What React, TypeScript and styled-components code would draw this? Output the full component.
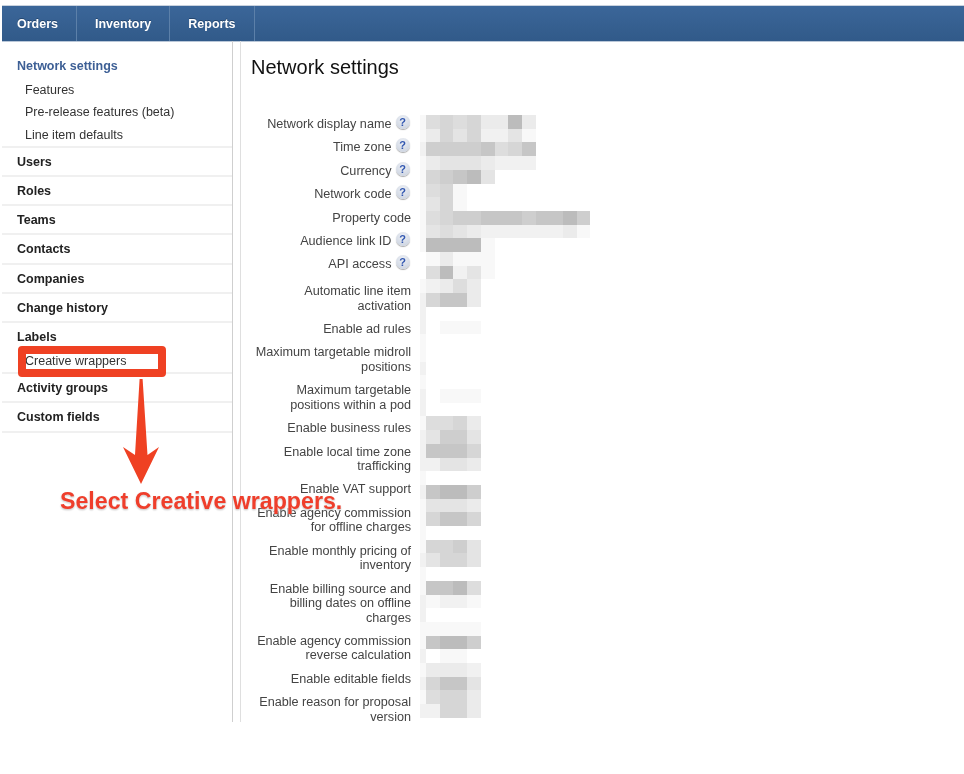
import styled, { createGlobalStyle } from "styled-components";

const GlobalStyle = createGlobalStyle`
  html, body {
    margin: 0;
    padding: 0;
    background: #fff;
  }
  body {
    font-family: "Liberation Sans", Arial, sans-serif;
    font-size: 12.5px;
  }
`;

const tabs = ["Orders", "Inventory", "Reports"];

const navGroups = [
  { title: "Network settings", active: true, top: 18, subs: ["Features", "Pre-release features (beta)", "Line item defaults"] },
  { title: "Users" },
  { title: "Roles" },
  { title: "Teams" },
  { title: "Contacts" },
  { title: "Companies" },
  { title: "Change history" },
  { title: "Labels", subs: ["Creative wrappers"] },
  { title: "Activity groups" },
  { title: "Custom fields" },
];

const fields: { label: string; help?: boolean; extra?: number }[] = [
  { label: "Network display name", help: true },
  { label: "Time zone", help: true },
  { label: "Currency", help: true },
  { label: "Network code", help: true },
  { label: "Property code" },
  { label: "Audience link ID", help: true },
  { label: "API access", help: true, extra: 3.5 },
  { label: "Automatic line item activation" },
  { label: "Enable ad rules" },
  { label: "Maximum targetable midroll positions" },
  { label: "Maximum targetable positions within a pod" },
  { label: "Enable business rules" },
  { label: "Enable local time zone trafficking" },
  { label: "Enable VAT support" },
  { label: "Enable agency commission for offline charges" },
  { label: "Enable monthly pricing of inventory" },
  { label: "Enable billing source and billing dates on offline charges" },
  { label: "Enable agency commission reverse calculation" },
  { label: "Enable editable fields" },
  { label: "Enable reason for proposal version" },
];

// grey level of each censored block, one string per row, first column is the narrow one
const mosaic = [
  "156563393",
  "136462241",
  "277778568",
  "134443222",
  "167894",
  "1561",
  "1461",
  "1567788878897",
  "1454322222231",
  "199991",
  "013111",
  "059241",
  "12353",
  "26883",
  "2",
  "20111",
  "1",
  "1",
  "2",
  "1",
  "20111",
  "2",
  "15563",
  "24774",
  "28886",
  "22443",
  "1",
  "28997",
  "14443",
  "16886",
  "1",
  "16674",
  "24664",
  "1",
  "18895",
  "21221",
  "2",
  "11111",
  "18997",
  "20110",
  "13332",
  "26884",
  "15663",
  "22663",
];

const greys = ["#ffffff", "#f8f8f8", "#f1f1f1", "#ebebeb", "#e4e4e4", "#dddddd", "#d6d6d6", "#cecece", "#c6c6c6", "#bcbcbc"];

const CELL = 13.7;

const Mosaic = () => (
  <svg width="171" height="603" viewBox="0 0 171 603" shapeRendering="crispEdges" aria-hidden="true">
    {mosaic.map((row, y) =>
      row.split("").map((level, x) =>
        level === "0" ? null : (
          <rect
            key={`${x}-${y}`}
            x={x === 0 ? 0 : 6 + (x - 1) * CELL}
            y={y * CELL}
            width={x === 0 ? 6 : CELL}
            height={CELL}
            fill={greys[Number(level)]}
          />
        )
      )
    )}
  </svg>
);

export default function App() {
  return (
    <Page>
      <GlobalStyle />
      <TopBar>
        {tabs.map((tab) => (
          <Tab key={tab}>{tab}</Tab>
        ))}
      </TopBar>
      <Body>
        <Sidebar>
          {navGroups.map((group) => (
            <NavGroup key={group.title} $top={group.top}>
              <NavTitle $active={group.active}>{group.title}</NavTitle>
              {group.subs?.map((sub) => (
                <NavSub key={sub}>{sub}</NavSub>
              ))}
            </NavGroup>
          ))}
        </Sidebar>
        <Main>
          <Heading>Network settings</Heading>
          <Form>
            <Labels>
              {fields.map((field) => (
                <FieldRow key={field.label} $extra={field.extra}>
                  <FieldLabel>{field.label}</FieldLabel>
                  {field.help && <Help>?</Help>}
                </FieldRow>
              ))}
            </Labels>
            <Mosaic />
          </Form>
        </Main>
      </Body>

      <Callout />
      <Arrow width="40" height="108" viewBox="0 0 40 108" aria-hidden="true">
        <path d="M18.6 0 L21.6 0 L26.5 76 L38 68 L20 105 L2 68 L14 76 Z" fill="#ef4123" />
      </Arrow>
      <Caption>Select Creative wrappers.</Caption>
    </Page>
  );
}

const Page = styled.div`
  position: relative;
  height: 774px;
  padding: 6px 0 0 2px;
  box-sizing: border-box;
  overflow: hidden;
  filter: blur(0.35px);
`;

const TopBar = styled.div`
  display: flex;
  height: 35px;
  background: linear-gradient(#3b6699, #315a89);
  box-shadow: 0 -1px 0 #c9d2de, 0 1px 0 #b9c7d8;
`;

const Tab = styled.div`
  display: flex;
  align-items: center;
  padding: 0 18px;
  border-right: 1px solid #5c80a9;
  color: #fff;
  font-weight: bold;
  text-shadow: 0 -1px 0 #24466e;

  &:first-child {
    padding-left: 15px;
  }
`;

const Body = styled.div`
  display: flex;
  height: 681px;
`;

const Sidebar = styled.nav`
  width: 231px;
  box-sizing: border-box;
  border-right: 1px solid #cfcfcf;
  flex-shrink: 0;
`;

const NavGroup = styled.div<{ $top?: number }>`
  padding: ${(p) => p.$top ?? 7}px 0 0 15px;
  min-height: 29.15px;
  box-sizing: border-box;
  border-bottom: 2px solid #f0f0f0;
`;

const NavTitle = styled.div<{ $active?: boolean }>`
  line-height: 15px;
  margin-bottom: 5px;
  font-weight: bold;
  color: ${(p) => (p.$active ? "#3d5f95" : "#222")};
`;

const NavSub = styled.div`
  padding-left: 8px;
  line-height: 22.35px;
  color: #333;
`;

const Main = styled.main`
  flex: 1;
  margin-left: 7px;
  padding: 14px 0 0 10px;
  border-left: 1px solid #dfdfdf;
`;

const Heading = styled.h1`
  margin: 0 0 36px;
  font-size: 20px;
  line-height: 24px;
  font-weight: normal;
  color: #111;
`;

const Form = styled.div`
  display: flex;
  align-items: flex-start;
  gap: 9px;
`;

const Labels = styled.div`
  width: 160px;
  padding-top: 2px;
  flex-shrink: 0;
`;

const FieldRow = styled.div<{ $extra?: number }>`
  display: flex;
  justify-content: flex-end;
  gap: 4px;
  margin-bottom: ${(p) => 8.88 + (p.$extra ?? 0)}px;

  &:last-child {
    margin-bottom: 0;
  }
`;

const FieldLabel = styled.div`
  font-size: 12.65px;
  line-height: 14.5px;
  text-align: right;
  color: #444;
`;

const Help = styled.span`
  width: 14px;
  height: 14px;
  margin: -2px 1.5px 0 0;
  border-radius: 50%;
  flex-shrink: 0;
  background: radial-gradient(circle at 50% 30%, #eef1f6, #c6cedc);
  box-shadow: 0 1px 1px #aaa;
  color: #3257b0;
  font-size: 11px;
  font-weight: bold;
  line-height: 14px;
  text-align: center;
`;

const Callout = styled.div`
  position: absolute;
  left: 18px;
  top: 346px;
  width: 148px;
  height: 31px;
  box-sizing: border-box;
  border: 8px solid #ef4123;
  border-radius: 4px;
`;

const Arrow = styled.svg`
  position: absolute;
  left: 121px;
  top: 379px;
`;

const Caption = styled.div`
  position: absolute;
  left: 60px;
  top: 487px;
  color: #ef3e2b;
  font-size: 23.2px;
  line-height: 28px;
  font-weight: bold;
  white-space: nowrap;
  text-shadow: 0 0 3px #fff, 0 1px 2px rgba(0, 0, 0, 0.35);
`;
